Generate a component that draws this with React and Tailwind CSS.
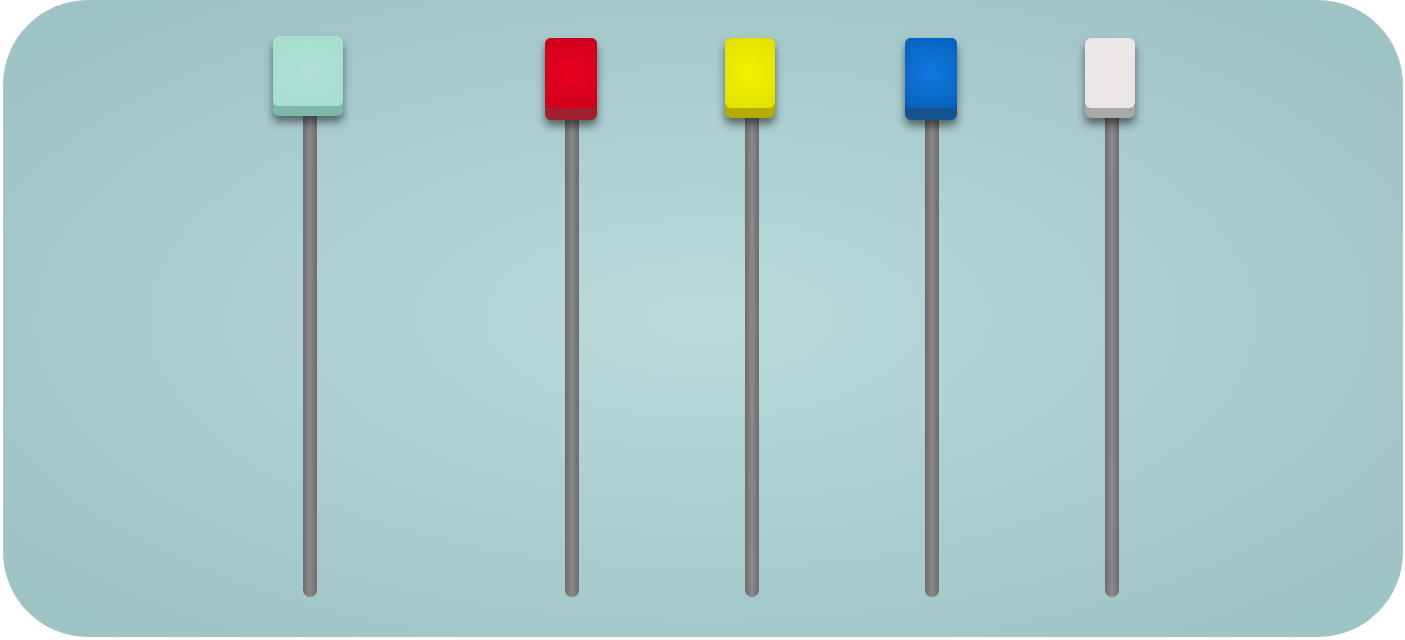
import React from "react";

function Knob({ w, h, face, band, shift = "" }) {
  return (
    <div
      className={`relative z-10 rounded-[6px] shadow-[0_6px_8px_rgba(0,0,0,0.5)] ${w} ${h} ${band} ${shift}`}
    >
      <div className={`h-[70px] w-full rounded-[6px] ${face}`} />
    </div>
  );
}

function Slider({ knob, ml, pt, trackH }) {
  return (
    <div className={`flex w-[80px] flex-col items-center ${pt} ${ml}`}>
      {knob}
      <div
        className={`relative z-0 -mt-[6px] w-[14px] rounded-full bg-[linear-gradient(90deg,#6c6c6c_0%,#8a8a8a_50%,#6c6c6c_100%)] ${trackH}`}
      />
    </div>
  );
}

export default function App() {
  return (
    <div className="h-[640px] w-[1405px] bg-white">
      <div className="ml-[3px] flex h-[637px] w-[1400px] rounded-[85px] bg-[radial-gradient(ellipse_at_50%_50%,#bbdadc_0%,#aacdcf_50%,#9dc2c4_100%)] pl-[267px]">
        <Slider
          ml=""
          pt="pt-[36px]"
          trackH="h-[487px]"
          knob={
            <Knob
              w="w-[70px]"
              h="h-[80px]"
              shift="-translate-x-[2px]"
              face="bg-[radial-gradient(circle_at_50%_50%,#b2dfd5_0%,#a4dfcd_100%)]"
              band="bg-[#7fb8ab]"
            />
          }
        />
        <Slider
          ml="ml-[182px]"
          pt="pt-[38px]"
          trackH="h-[483px]"
          knob={
            <Knob
              w="w-[52px]"
              h="h-[82px]"
              shift="-translate-x-[1px]"
              face="bg-[radial-gradient(circle_at_50%_50%,#e8001f_0%,#cc001b_100%)]"
              band="bg-[#a0202e]"
            />
          }
        />
        <Slider
          ml="ml-[100px]"
          pt="pt-[38px]"
          trackH="h-[485px]"
          knob={
            <Knob
              w="w-[50px]"
              h="h-[80px]"
              shift="-translate-x-[2px]"
              face="bg-[radial-gradient(circle_at_50%_50%,#f2f200_0%,#e0e000_100%)]"
              band="bg-[#b3ad00]"
            />
          }
        />
        <Slider
          ml="ml-[100px]"
          pt="pt-[38px]"
          trackH="h-[483px]"
          knob={
            <Knob
              w="w-[52px]"
              h="h-[82px]"
              shift="-translate-x-[1px]"
              face="bg-[radial-gradient(circle_at_50%_50%,#1179e0_0%,#0561bc_100%)]"
              band="bg-[#155290]"
            />
          }
        />
        <Slider
          ml="ml-[100px]"
          pt="pt-[38px]"
          trackH="h-[485px]"
          knob={
            <Knob
              w="w-[50px]"
              h="h-[80px]"
              shift="-translate-x-[2px]"
              face="bg-[#ebe7e6]"
              band="bg-[#a9a9a9]"
            />
          }
        />
      </div>
    </div>
  );
}
